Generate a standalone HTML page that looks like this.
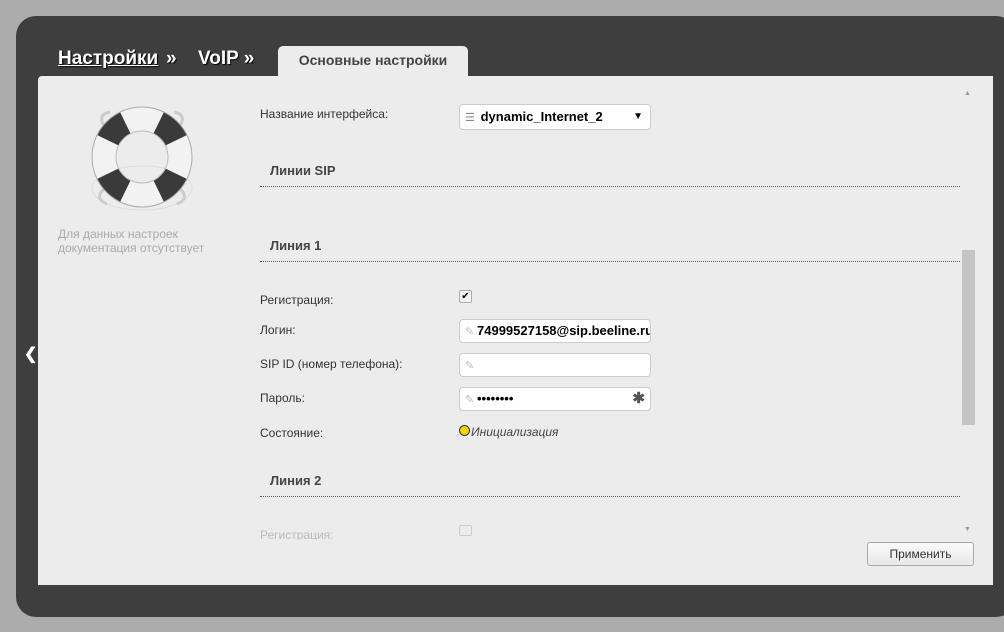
<!DOCTYPE html>
<html><head><meta charset="utf-8"><style>
body{margin:0;width:1004px;height:632px;background:#acacac;font-family:"Liberation Sans",Arial,sans-serif;position:relative;overflow:hidden}
.dark{position:absolute;left:16px;top:16px;width:1000px;height:601px;background:#3e3e3e;border-radius:20px}
.content{position:absolute;left:38px;top:76px;width:955px;height:509px;background:#ececec;border-radius:4px 0 0 4px}
.crumb{position:absolute;top:48px;font-size:19px;font-weight:bold;color:#fff;text-shadow:1px 1px 1px #000}
.tab{position:absolute;left:278px;top:46px;width:190px;height:31px;background:#ececec;border-radius:5px 5px 0 0;font-size:14px;font-weight:bold;color:#444;text-align:center;line-height:28px}
.lbl{position:absolute;left:260px;font-size:12px;color:#333}
.h{position:absolute;left:270px;font-size:13px;font-weight:bold;color:#444}
.line{position:absolute;left:260px;width:700px;border-top:1px dotted #555}
.inp{position:absolute;left:459px;width:190px;height:22px;background:#fff;border:1px solid #ccc;border-radius:4px;font-size:13px;font-weight:bold;line-height:22px;overflow:hidden;white-space:nowrap}
.pen{display:inline-block;width:12px;color:#bbb;font-weight:normal;margin-left:5px;font-size:11px}
.sb{position:absolute;left:962px;top:250px;width:13px;height:175px;background:#c4c4c4}
</style></head><body>
<div class="dark"></div>
<div class="crumb" style="left:58px;text-decoration:underline">Настройки</div>
<div class="crumb" style="left:166px">»</div>
<div class="crumb" style="left:198px">VoIP »</div>
<div class="tab">Основные настройки</div>
<div class="content"></div>
<svg style="position:absolute;left:85px;top:100px" width="115" height="115" viewBox="0 0 115 115">
<ellipse cx="57" cy="88" rx="50" ry="22" fill="none" stroke="#ddd" stroke-width="1"/>
<path d="M22 30 Q10 15 25 12 M92 30 Q104 15 89 12 M20 88 Q8 98 22 104 M94 88 Q106 98 92 104" fill="none" stroke="#ccc" stroke-width="3"/>
<circle cx="57" cy="57" r="38" fill="none" stroke="#f2f2f2" stroke-width="24"/>
<g fill="none" stroke="#3a3a3a" stroke-width="24">
<path d="M73.7 22.8 A38 38 0 0 1 91.2 40.3"/>
<path d="M91.2 73.7 A38 38 0 0 1 73.7 91.2"/>
<path d="M40.3 91.2 A38 38 0 0 1 22.8 73.7"/>
<path d="M22.8 40.3 A38 38 0 0 1 40.3 22.8"/>
</g>
<circle cx="57" cy="57" r="26" fill="none" stroke="#bbb"/>
<circle cx="57" cy="57" r="50" fill="none" stroke="#aaa"/>
</svg>
<div style="position:absolute;left:58px;top:227px;font-size:12px;color:#aaa;line-height:14px">Для данных настроек<br>документация отсутствует</div>
<div style="position:absolute;left:24px;top:344px;color:#fff;font-size:16px;font-weight:bold">&#10094;</div>
<div class="lbl" style="top:107px">Название интерфейса:</div>
<div class="inp" style="top:104px;height:24px;line-height:24px"><span class="pen" style="color:#888">☰</span> dynamic_Internet_2<span style="position:absolute;right:7px;font-size:10px">▼</span></div>
<div class="h" style="top:163px">Линии SIP</div><div class="line" style="top:186px"></div>
<div class="h" style="top:238px">Линия 1</div><div class="line" style="top:261px"></div>
<div class="lbl" style="top:293px">Регистрация:</div>
<div style="position:absolute;left:459px;top:290px;width:11px;height:11px;border:1px solid #aaa;border-radius:2px;background:#f4f4f4;font-size:10px;line-height:11px;text-align:center">✔</div>
<div class="lbl" style="top:323px">Логин:</div>
<div class="inp" style="top:319px"><span class="pen">✎</span>74999527158@sip.beeline.ru</div>
<div class="lbl" style="top:357px">SIP ID (номер телефона):</div>
<div class="inp" style="top:353px"><span class="pen">✎</span></div>
<div class="lbl" style="top:391px">Пароль:</div>
<div class="inp" style="top:387px"><span class="pen">✎</span>••••••••<span style="position:absolute;right:5px;color:#555;font-size:15px">✱</span></div>
<div class="lbl" style="top:426px">Состояние:</div>
<div style="position:absolute;left:459px;top:425px;width:9px;height:9px;border-radius:50%;background:#f2d400;border:1px solid #333"></div>
<div style="position:absolute;left:471px;top:425px;font-size:12px;font-style:italic;color:#444">Инициализация</div>
<div class="h" style="top:473px">Линия 2</div><div class="line" style="top:496px"></div>
<div class="lbl" style="top:528px;color:#bbb;height:12px;overflow:hidden">Регистрация:</div>
<div style="position:absolute;left:459px;top:525px;width:11px;height:11px;border:1px solid #ccc;border-radius:2px;height:9px"></div>
<div style="position:absolute;left:38px;top:540px;width:924px;height:45px;background:#ececec"></div>
<div class="sb"></div>
<div style="position:absolute;left:964px;top:90px;font-size:7px;color:#999">▲</div>
<div style="position:absolute;left:964px;top:526px;font-size:7px;color:#999">▼</div>
<div style="position:absolute;left:867px;top:542px;width:105px;height:22px;border:1px solid #aaa;border-radius:3px;background:linear-gradient(#fafafa,#e8e8e8);font-size:12px;color:#333;text-align:center;line-height:22px">Применить</div>
</body></html>
